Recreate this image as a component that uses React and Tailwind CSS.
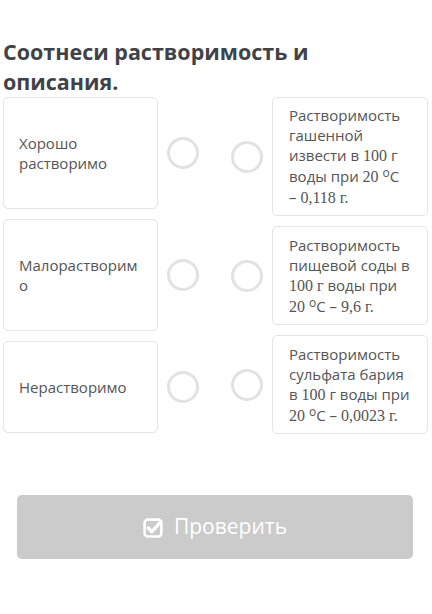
import React from "react";

const sans = { fontFamily: '"Open Sans", "Noto Sans", sans-serif' };

function Num({ children }) {
  return <span className="font-['Liberation_Serif',serif] text-[16px]">{children}</span>;
}

function Deg() {
  return (
    <>
      <span className="relative -top-[5px] text-[12px] leading-none">o</span>C
    </>
  );
}

function Tail({ children }) {
  return (
    <span className="whitespace-nowrap">
      – <Num>{children}</Num>
    </span>
  );
}

function Circle() {
  return <div className="w-[32px] h-[32px] rounded-full border-[3px] border-[#e2e2e2] bg-white shrink-0" />;
}

export default function App() {
  const left = [
    { text: "Хорошо растворимо", h: "h-[112px]" },
    { text: "Малорастворимо", h: "h-[112px]" },
    { text: "Нерастворимо", h: "h-[92px]" },
  ];
  const right = [
    {
      h: "h-[119px]",
      content: (
        <>
          Растворимость гашенной извести в <Num>100</Num> г воды при <Num>20</Num> <Deg /> <Tail>0,118 г.</Tail>
        </>
      ),
    },
    {
      h: "h-[99px]",
      content: (
        <>
          Растворимость пищевой соды в <Num>100 г</Num> воды при <Num>20</Num> <Deg /> <Tail>9,6 г.</Tail>
        </>
      ),
    },
    {
      h: "h-[99px]",
      content: (
        <>
          Растворимость сульфата бария в <Num>100</Num> г воды при <Num>20</Num> <Deg /> <Tail>0,0023 г.</Tail>
        </>
      ),
    },
  ];
  return (
    <div className="w-[432px] h-[614px] bg-white overflow-hidden" style={sans}>
      <h1 className="pt-[37px] pl-[3px] pr-[100px] text-[21.5px] leading-[30px] font-bold text-[#3f4348]">
        Соотнеси растворимость и описания.
      </h1>
      <div className="flex">
        <div className="flex flex-col gap-[10px] ml-[3px]">
          {left.map((l, i) => (
            <div key={i} className="flex items-center">
              <div
                className={`w-[155px] ${l.h} border border-[#e4e4e4] rounded-[5px] flex items-center pl-[15px] pr-[16px] text-[15px] leading-[20px] text-[#555] break-words`}
              >
                <div className="w-full">{l.text}</div>
              </div>
              <div className="ml-[9px]">
                <Circle />
              </div>
            </div>
          ))}
        </div>
        <div className="flex flex-col gap-[10px] ml-[32px]">
          {right.map((r, i) => (
            <div key={i} className="flex items-center">
              <Circle />
              <div
                className={`ml-[9px] w-[156px] ${r.h} border border-[#e4e4e4] rounded-[5px] flex items-center pl-[16px] pr-[12px] text-[15px] leading-[20px] text-[#555]`}
              >
                <div>{r.content}</div>
              </div>
            </div>
          ))}
        </div>
      </div>
      <div className="px-[17px] mt-[61px] w-[430px]">
        <div className="h-[64px] rounded-[5px] bg-[#cbcbcb] flex items-center justify-center gap-[10px] text-white text-[21px]">
          <svg width="21" height="21" viewBox="0 0 20 20" fill="none">
            <rect x="1.5" y="2.5" width="16" height="16" rx="3" stroke="white" strokeWidth="2.4" />
            <path d="M5 10.5l3.5 3.5L17 4.5" stroke="white" strokeWidth="3.2" strokeLinecap="round" strokeLinejoin="round" />
          </svg>
          <span>Проверить</span>
        </div>
      </div>
    </div>
  );
}
